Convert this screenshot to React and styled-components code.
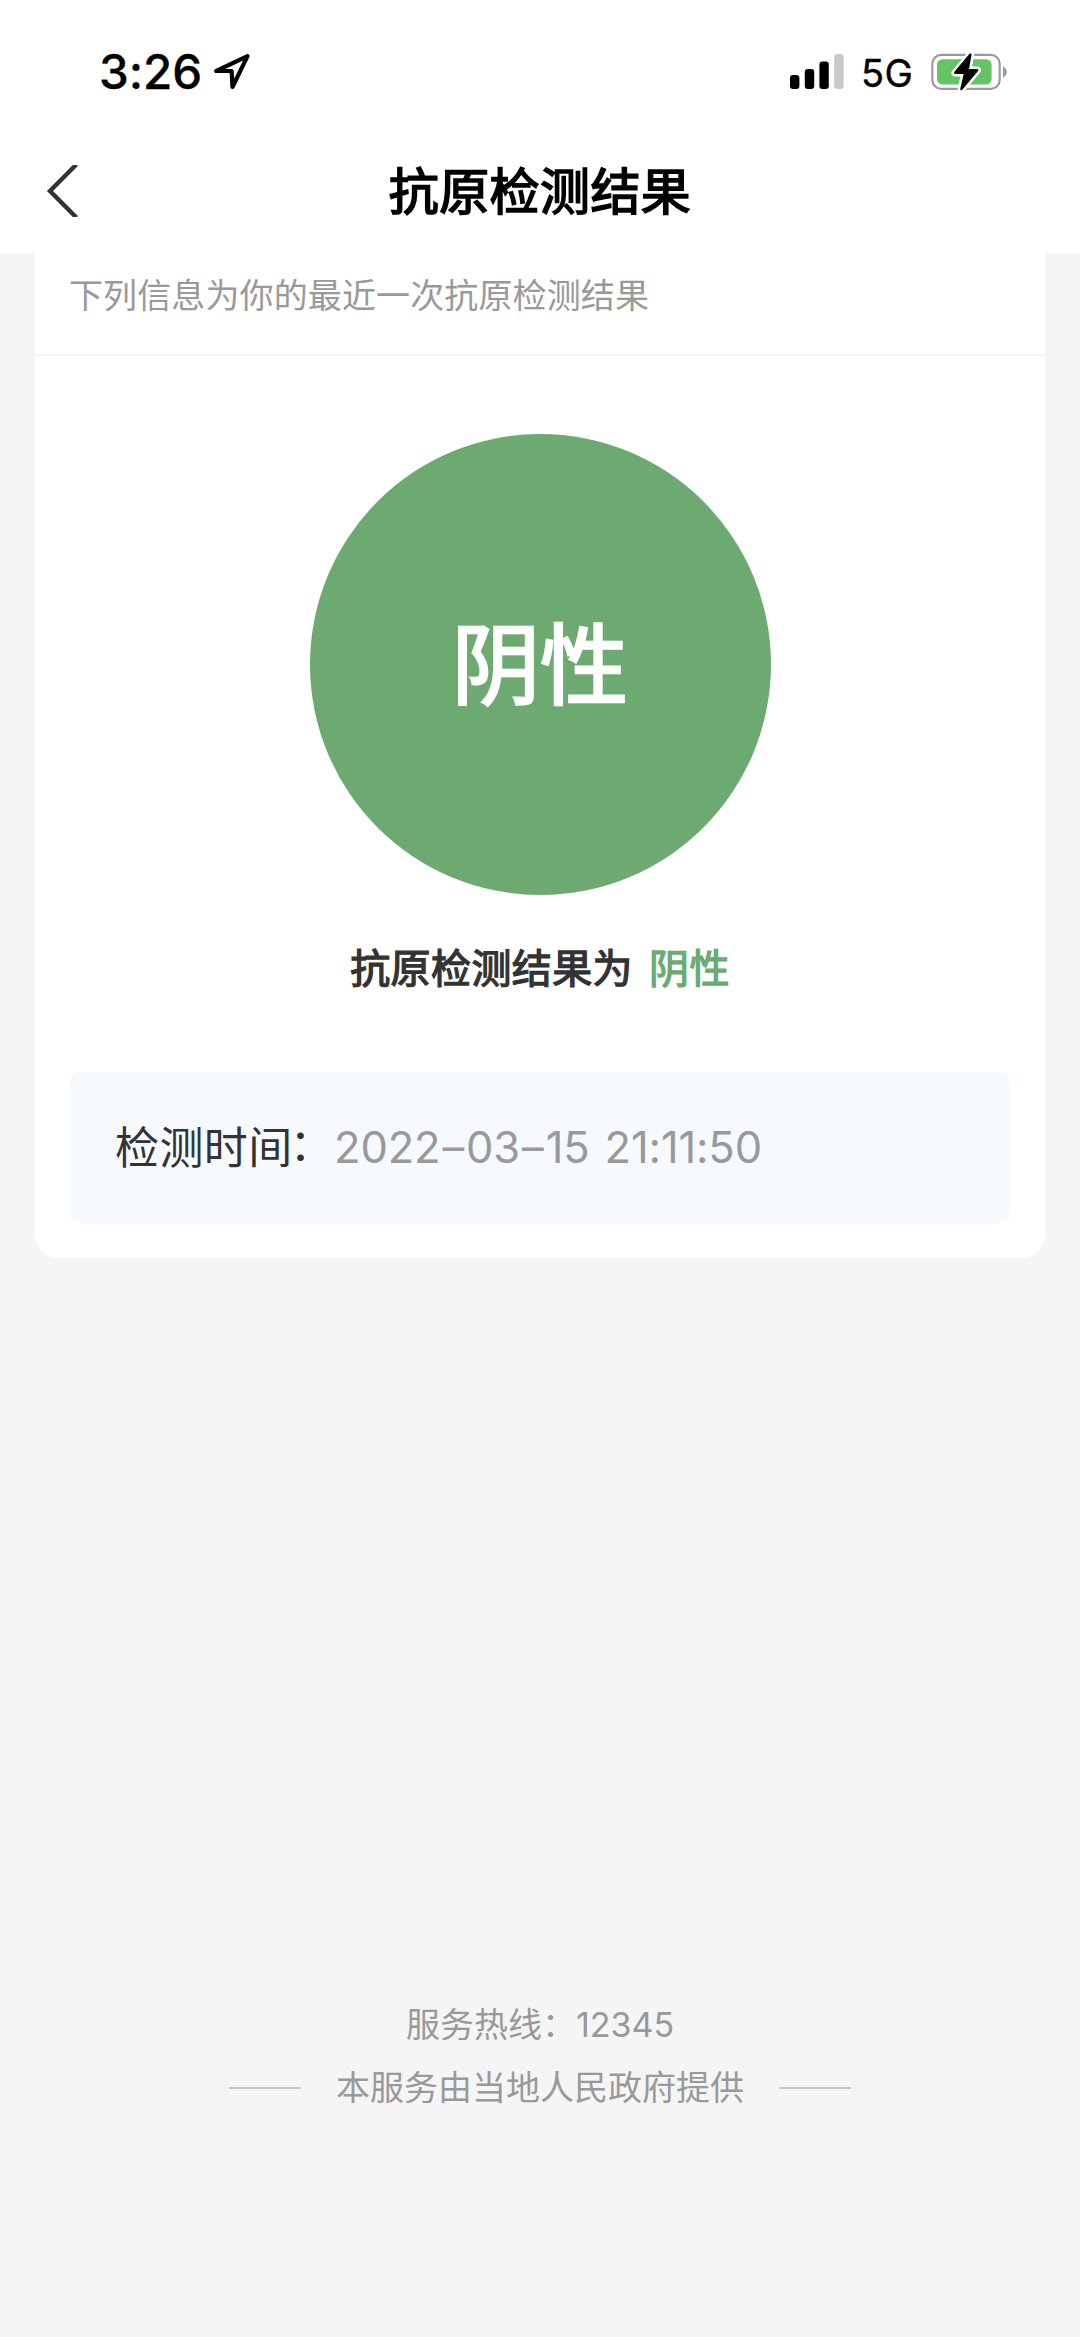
import React from 'react';
import styled, { createGlobalStyle } from 'styled-components';

const GlobalStyle = createGlobalStyle`
	* {
		box-sizing: border-box;
	}

	body {
		margin: 0;
		background: #f5f5f5;
		font-family: Inter, 'Noto Sans CJK SC', sans-serif;
	}
`;

const Page = styled.div`
	display: flex;
	flex-direction: column;
	width: 1080px;
	height: 2337px;
	background: #f5f5f5;
	overflow: hidden;
`;

const StatusBar = styled.div`
	display: flex;
	align-items: center;
	justify-content: space-between;
	height: 144px;
	padding: 0 72px 0 99px;
	background: #fff;
`;

const StatusGroup = styled.div`
	display: flex;
	align-items: center;
`;

const Clock = styled.span`
	width: 101px;
	font-size: 47.5px;
	font-weight: 500;
	line-height: 56px;
	letter-spacing: -0.1px;
	color: #000;
	margin-right: 13px;
	white-space: nowrap;
	-webkit-text-stroke: 0.3px currentColor;
`;

const Network = styled.span`
	width: 53px;
	font-size: 38px;
	font-weight: 400;
	line-height: 46px;
	letter-spacing: 0.3px;
	color: #000;
	margin: 2px 17px 0 17px;
	white-space: nowrap;
	-webkit-text-stroke: 0.4px currentColor;
`;

const NavBar = styled.header`
	display: grid;
	grid-template-columns: 120px 1fr 120px;
	align-items: center;
	height: 109px;
	padding-bottom: 15px;
	background: #fff;
`;

const BackButton = styled.button`
	display: flex;
	border: none;
	background: none;
	padding: 0 0 0 44px;
`;

const Title = styled.h1`
	margin: 0;
	padding-bottom: 6px;
	font-family: 'Noto Sans CJK SC', sans-serif;
	font-size: 50px;
	font-weight: 400;
	line-height: 60px;
	letter-spacing: 0.4px;
	text-align: center;
	color: #000;
	-webkit-text-stroke: 1.7px currentColor;
`;

const Card = styled.main`
	margin: 0 35px;
	padding: 0 0 35px;
	background: #fff;
	border-radius: 0 0 23px 23px;
`;

const Hint = styled.p`
	margin: 0;
	height: 103px;
	padding: 16px 34px 0;
	border-bottom: 2px solid #f5f5f5;
	font-family: 'Noto Sans CJK SC', sans-serif;
	font-size: 34px;
	line-height: 50px;
	letter-spacing: 0.12px;
	color: #999;
`;

const ResultCircle = styled.div`
	display: flex;
	align-items: center;
	justify-content: center;
	width: 461px;
	height: 461px;
	margin: 78px auto 0;
	padding-bottom: 11px;
	border-radius: 50%;
	background: #6daa72;
	font-family: 'Noto Sans CJK SC', sans-serif;
	font-size: 88px;
	font-weight: 400;
	line-height: 1;
	color: #fff;
	-webkit-text-stroke: 2.6px currentColor;
`;

const ResultText = styled.p`
	display: flex;
	justify-content: center;
	gap: 16px;
	margin: 42px 0 0;
	font-family: 'Noto Sans CJK SC', sans-serif;
	font-size: 40px;
	font-weight: 400;
	line-height: 58px;
	letter-spacing: 0.4px;
	color: #333;
	-webkit-text-stroke: 1.3px currentColor;
`;

const Negative = styled.span`
	color: #6daa72;
`;

const TimeBox = styled.div`
	display: flex;
	align-items: center;
	height: 151px;
	margin: 77px 34px 0;
	padding: 0 46px;
	border-radius: 12px;
	background: #f6faff;
`;

const TimeLabel = styled.span`
	width: 219px;
	padding-bottom: 5px;
	font-family: 'Noto Sans CJK SC', sans-serif;
	font-size: 44px;
	line-height: 60px;
	letter-spacing: 0.4px;
	color: #333;
	white-space: nowrap;
`;

const Colon = styled.span`
	display: inline-block;
	line-height: 1;
	margin-left: -3px;
	vertical-align: 3px;
`;

const TimeValue = styled.time`
	padding-bottom: 2px;
	font-size: 43.5px;
	font-weight: 400;
	line-height: 60px;
	letter-spacing: -0.15px;
	word-spacing: 3px;
	color: #999;
	white-space: nowrap;
`;

const Dash = styled.span`
	margin: 0 2px;
`;

const Footer = styled.footer`
	margin-top: auto;
	padding-bottom: 224px;
	font-family: Inter, 'Noto Sans CJK SC', sans-serif;
	font-size: 34px;
	line-height: 50px;
	color: #999;
	text-align: center;
`;

const Hotline = styled.p`
	margin: 0 0 13px;
`;

const Provider = styled.div`
	display: flex;
	align-items: center;
	justify-content: center;
	gap: 35px;

	&::before,
	&::after {
		content: '';
		width: 72px;
		height: 2px;
		background: #c8c8c8;
	}
`;

const LocationIcon = () => (
	<svg width='38' height='38' viewBox='0 0 38 38' fill='none'>
		<path
			d='M34.5 3.2 L3.2 18 H18.6 L19.5 34 Z'
			stroke='#000'
			strokeWidth='4.2'
			strokeLinejoin='round'
		/>
	</svg>
);

const SignalIcon = () => (
	<svg width='54' height='36' viewBox='0 0 54 36'>
		<rect x='0' y='21' width='9.4' height='14' rx='3' />
		<rect x='14.8' y='15' width='9.4' height='20' rx='3' />
		<rect x='29.4' y='7.6' width='9.4' height='27.4' rx='3' />
		<rect x='44.2' y='0' width='9.4' height='35' rx='3' fill='#c9c9c9' />
	</svg>
);

const BatteryIcon = () => (
	<svg width='77' height='40' viewBox='0 0 77 40'>
		<rect x='1.3' y='2.8' width='67.4' height='34' rx='9' fill='none' stroke='#9b9b9b' strokeWidth='2.2' />
		<path d='M72 14.5 C77 16.5 77 23.5 72 25.5 Z' fill='#9b9b9b' />
		<rect x='6' y='7.2' width='54.6' height='25.4' rx='5.5' fill='#65c466' />
		<path
			d='M39.4 2.6 L24.2 20.8 H34.2 L30.4 37 L46.2 18.2 H36.6 Z'
			stroke='#fff'
			strokeWidth='7.5'
			strokeLinejoin='round'
		/>
		<path
			d='M39.4 2.6 L24.2 20.8 H34.2 L30.4 37 L46.2 18.2 H36.6 Z'
			stroke='#000'
			strokeWidth='2.4'
			strokeLinejoin='round'
		/>
	</svg>
);

const BackIcon = () => (
	<svg width='36' height='52' viewBox='0 0 36 52' fill='none'>
		<path d='M32.4 -0.5 L6 26 L32.4 52.5' stroke='#333' strokeWidth='4.4' />
	</svg>
);

const App = () => {
	return (
		<>
			<GlobalStyle />
			<Page>
				<StatusBar>
					<StatusGroup>
						<Clock>3:26</Clock>
						<LocationIcon />
					</StatusGroup>
					<StatusGroup>
						<SignalIcon />
						<Network>5G</Network>
						<BatteryIcon />
					</StatusGroup>
				</StatusBar>
				<NavBar>
					<BackButton aria-label='返回'>
						<BackIcon />
					</BackButton>
					<Title>抗原检测结果</Title>
				</NavBar>
				<Card>
					<Hint>下列信息为你的最近一次抗原检测结果</Hint>
					<ResultCircle>阴性</ResultCircle>
					<ResultText>
						<span>抗原检测结果为</span>
						<Negative>阴性</Negative>
					</ResultText>
					<TimeBox>
						<TimeLabel>
							检测时间<Colon>：</Colon>
						</TimeLabel>
						<TimeValue>
							2022<Dash>–</Dash>03<Dash>–</Dash>15 21:11:50
						</TimeValue>
					</TimeBox>
				</Card>
				<Footer>
					<Hotline>服务热线：12345</Hotline>
					<Provider>本服务由当地人民政府提供</Provider>
				</Footer>
			</Page>
		</>
	);
};

export default App;
